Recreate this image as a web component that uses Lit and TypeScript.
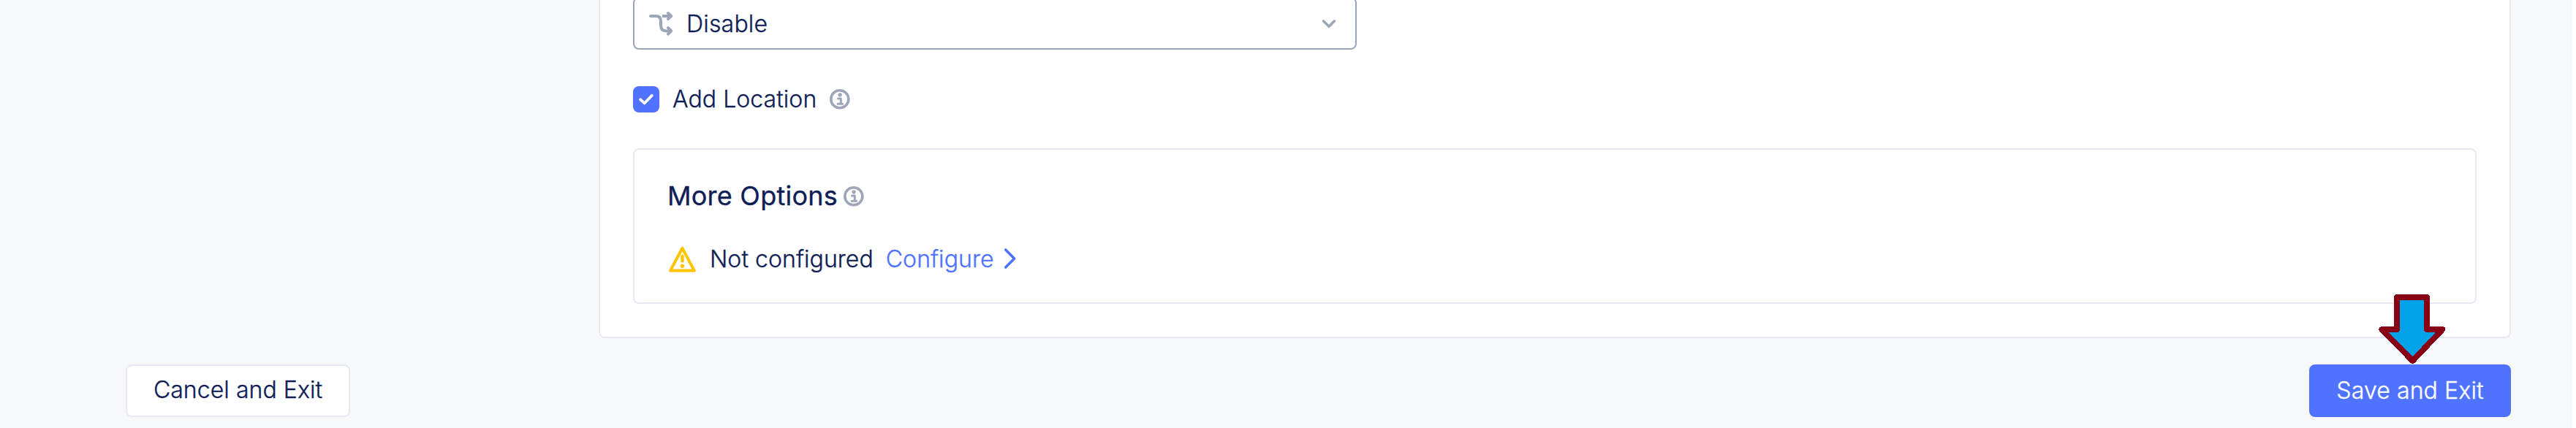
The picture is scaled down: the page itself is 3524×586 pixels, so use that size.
import { LitElement, html, css } from "lit";
import { customElement } from "lit/decorators.js";

@customElement("info-icon")
class InfoIcon extends LitElement {
  static styles = css`
    :host { display: block; width: 28px; height: 28px; color: #9da6b9; }
    svg { display: block; }
  `;
  render() {
    return html`
      <svg width="28" height="28" viewBox="0 0 28 28">
        <circle cx="13.800" cy="13.800" r="12" fill="none" stroke="currentColor" stroke-width="3.600"/>
        <circle cx="14.100" cy="7.800" r="2.600" fill="currentColor"/>
        <path d="M11.500 12.900h3.800v7.300M11.200 20.300h6.400" fill="none" stroke="currentColor" stroke-width="3" stroke-linejoin="round" stroke-linecap="round"/>
      </svg>`;
  }
}

@customElement("app-root")
class AppRoot extends LitElement {
  static styles = css`
    :host {
      display: block;
      width: 3524px;
      height: 586px;
      overflow: hidden;
      background: #fff;
      font-family: Inter, sans-serif;
      font-size: 32px;
      font-weight: 300;
      letter-spacing: 0.06px;
      -webkit-text-stroke: 0.35px currentColor;
      color: #0f1e57;
      white-space: nowrap;
    }
    * { box-sizing: border-box; }
    svg { display: block; flex: none; }
    .page {
      width: 3519px;
      height: 586px;
      padding: 0 84px 0 172px;
      background: #f7f8fa;
      position: relative;
    }
    .panel {
      height: 463px;
      margin-left: 647px;
      padding: 0 45px;
      background: #fff;
      border: 2px solid #e6e8f4;
      border-top: 0;
      border-radius: 0 0 8px 8px;
      display: flow-root;
    }
    .select {
      display: flex;
      align-items: center;
      width: 990px;
      height: 72px;
      margin-top: -4px;
      padding: 0 25px 0 20px;
      border: 2px solid #9da6b9;
      border-radius: 8px;
    }
    .select .value { flex: 1; margin-left: 19px; letter-spacing: 0.2px; }
    .check {
      display: flex;
      align-items: center;
      height: 36px;
      margin-top: 50px;
    }
    .check info-icon { margin-top: -1px; }
    .box {
      width: 36px;
      height: 36px;
      border-radius: 8px;
      background: #4f73ff;
    }
    .check .label { margin: -1px 18px 0 18px; line-height: 36px; }
    .options {
      height: 213px;
      margin-top: 49px;
      padding: 41px 45px 0;
      border: 2px solid #e6e8f4;
      border-radius: 8px;
    }
    .title {
      display: flex;
      align-items: center;
      height: 44px;
      font-size: 36px;
      font-weight: 400;
      letter-spacing: 0.24px;
    }
    .title info-icon { margin: 2px 0 0 8px; }
    .status {
      display: flex;
      align-items: center;
      height: 40px;
      margin-top: 44px;
      padding-left: 2px;
    }
    .status .state { margin-left: 18px; }
    .link {
      display: flex;
      align-items: center;
      gap: 13px;
      margin-left: 17px;
      color: #4f73ff;
    }
    .footer {
      display: flex;
      justify-content: space-between;
      margin-top: 36px;
    }
    .btn {
      height: 72px;
      padding: 0;
      border: 2px solid #e6e8f4;
      border-radius: 8px;
      background: #fff;
      color: inherit;
      font: inherit;
      letter-spacing: inherit;
      text-align: center;
    }
    .cancel { width: 307px; padding-bottom: 3px; }
    .save {
      width: 276px;
      padding-bottom: 1px;
      border-color: #4f73ff;
      background: #4f73ff;
      color: #fff;
      letter-spacing: 0.12px;
    }
    .link, .btn { -webkit-text-stroke-color: currentColor; }
    .pointer { position: absolute; left: 3250px; top: 400px; }
  `;

  render() {
    return html`
      <div class="page">
        <div class="panel">
          <div class="select">
            <svg width="32" height="36" viewBox="0 0 32 36" fill="none" stroke="#9da6b9" stroke-width="4" stroke-linecap="round" stroke-linejoin="round">
              <path d="M2 8h7.500c4.500 0 6.500 2.500 6.500 7v6c0 5 2.500 7.400 7.500 7.400h6"/>
              <path d="M26 4l4.200 4-4.200 4M26 24.200l4.200 4.200-4.200 4.200"/>
              <path stroke-linecap="butt" d="M17.800 8H30"/>
            </svg>
            <span class="value">Disable</span>
            <svg width="22" height="16" viewBox="0 0 22 16" fill="none" stroke="#9da6b9" stroke-width="3.500" stroke-linecap="round" stroke-linejoin="round">
              <path d="M3.500 4.800L11 12.200L18.500 4.800"/>
            </svg>
          </div>
          <div class="check">
            <span class="box">
              <svg width="36" height="36" viewBox="0 0 36 36" fill="none" stroke="#fff" stroke-width="3.800" stroke-linecap="round" stroke-linejoin="round">
                <path d="M10 18.200L15.700 23.300L25.800 12.800"/>
              </svg>
            </span>
            <span class="label">Add Location</span>
            <info-icon></info-icon>
          </div>
          <div class="options">
            <div class="title"><span>More Options</span><info-icon></info-icon></div>
            <div class="status">
              <svg width="38" height="38" viewBox="0 0 38 38" fill="none" stroke="#ffc400" stroke-linecap="round" stroke-linejoin="round">
                <path stroke-width="4" d="M18.400 4.800L34.800 35.600H2Z"/>
                <path stroke-width="4.400" d="M18.400 15.800v6.400"/>
                <circle cx="18.400" cy="29.200" r="2.700" fill="#ffc400" stroke="none"/>
              </svg>
              <span class="state">Not configured</span>
              <span class="link">Configure
                <svg width="18" height="30" viewBox="0 0 18 30" fill="none" stroke="#4f73ff" stroke-width="3.600" stroke-linecap="round" stroke-linejoin="round">
                  <path d="M2.700 3L14.600 15L2.700 27"/>
                </svg>
              </span>
            </div>
          </div>
        </div>
        <div class="footer">
          <button class="btn cancel">Cancel and Exit</button>
          <button class="btn save">Save and Exit</button>
        </div>
        <svg class="pointer" width="100" height="100" viewBox="3250 400 100 100" shape-rendering="crispEdges">
          <path d="M3279 407H3320V451H3341.300L3300.500 494L3258.500 451H3279Z" fill="#00a2e8" stroke="#880015" stroke-width="8" stroke-linejoin="round"/>
        </svg>
      </div>
    `;
  }
}
